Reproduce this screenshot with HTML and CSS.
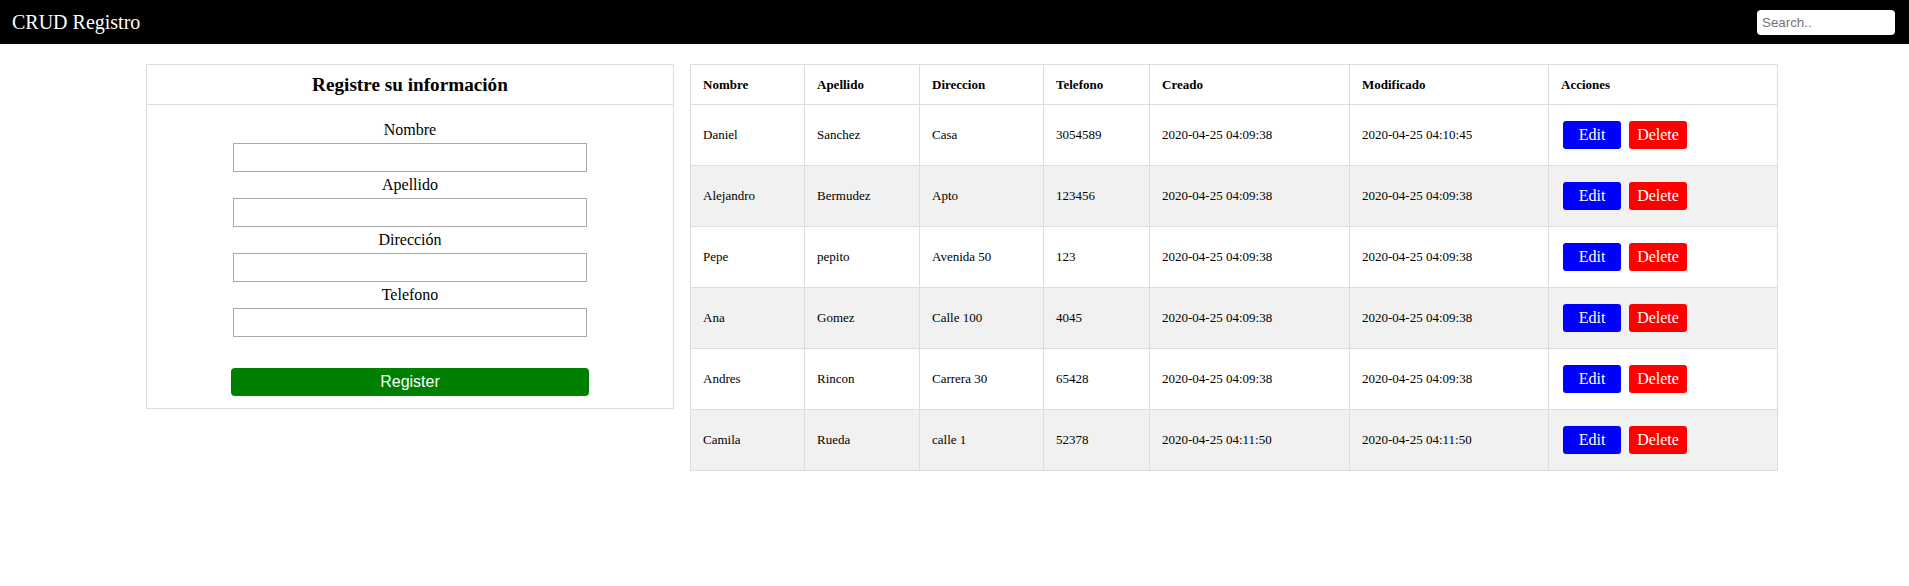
FILE: index.html
```html
<!DOCTYPE html>
<html lang="es">
<head>
<meta charset="utf-8">
<title>CRUD Registro</title>
<link rel="stylesheet" href="styles.css">
</head>
<body>
<nav class="navbar">
  <span class="brand">CRUD Registro</span>
  <input class="search" type="text" placeholder="Search..">
</nav>
<main class="main">
  <section class="card">
    <div class="card-header"><h3 class="card-title">Registre su información</h3></div>
    <form class="form">
      <label class="label">Nombre</label>
      <input class="field" type="text">
      <label class="label">Apellido</label>
      <input class="field" type="text">
      <label class="label">Dirección</label>
      <input class="field" type="text">
      <label class="label">Telefono</label>
      <input class="field" type="text">
      <button class="btn-register" type="button">Register</button>
    </form>
  </section>
  <table class="table">
    <colgroup>
      <col class="c1"><col class="c2"><col class="c3"><col class="c4"><col class="c5"><col class="c6"><col class="c7">
    </colgroup>
    <thead>
      <tr><th>Nombre</th><th>Apellido</th><th>Direccion</th><th>Telefono</th><th>Creado</th><th>Modificado</th><th>Acciones</th></tr>
    </thead>
    <tbody>
      <tr><td>Daniel</td><td>Sanchez</td><td>Casa</td><td>3054589</td><td>2020-04-25 04:09:38</td><td>2020-04-25 04:10:45</td><td class="actions"><div class="btns"><button class="btn btn-edit">Edit</button><button class="btn btn-delete">Delete</button></div></td></tr>
      <tr><td>Alejandro</td><td>Bermudez</td><td>Apto</td><td>123456</td><td>2020-04-25 04:09:38</td><td>2020-04-25 04:09:38</td><td class="actions"><div class="btns"><button class="btn btn-edit">Edit</button><button class="btn btn-delete">Delete</button></div></td></tr>
      <tr><td>Pepe</td><td>pepito</td><td>Avenida 50</td><td>123</td><td>2020-04-25 04:09:38</td><td>2020-04-25 04:09:38</td><td class="actions"><div class="btns"><button class="btn btn-edit">Edit</button><button class="btn btn-delete">Delete</button></div></td></tr>
      <tr><td>Ana</td><td>Gomez</td><td>Calle 100</td><td>4045</td><td>2020-04-25 04:09:38</td><td>2020-04-25 04:09:38</td><td class="actions"><div class="btns"><button class="btn btn-edit">Edit</button><button class="btn btn-delete">Delete</button></div></td></tr>
      <tr><td>Andres</td><td>Rincon</td><td>Carrera 30</td><td>65428</td><td>2020-04-25 04:09:38</td><td>2020-04-25 04:09:38</td><td class="actions"><div class="btns"><button class="btn btn-edit">Edit</button><button class="btn btn-delete">Delete</button></div></td></tr>
      <tr><td>Camila</td><td>Rueda</td><td>calle 1</td><td>52378</td><td>2020-04-25 04:11:50</td><td>2020-04-25 04:11:50</td><td class="actions"><div class="btns"><button class="btn btn-edit">Edit</button><button class="btn btn-delete">Delete</button></div></td></tr>
    </tbody>
  </table>
</main>
</body>
</html>
```
FILE: styles.css
```css
* { box-sizing: border-box; }
body {
  margin: 0;
  font-family: "Liberation Serif", "Times New Roman", serif;
  color: #000;
  background: #fff;
}
.navbar {
  height: 44px;
  background: #000;
  display: flex;
  align-items: center;
  justify-content: space-between;
  padding: 0 14px 0 12px;
}
.brand {
  color: #fff;
  font-size: 20px;
  line-height: 22px;
  margin-top: -1px;
}
.search {
  width: 138px;
  height: 25px;
  border: none;
  border-radius: 4px;
  padding: 0 5px;
  font-family: "Liberation Sans", Arial, sans-serif;
  font-size: 13.333px;
  background: #fff;
  outline: none;
}
.search::placeholder { color: #757575; }
.main {
  display: flex;
  align-items: flex-start;
  gap: 16px;
  padding: 20px 0 0 146px;
}
.card {
  width: 528px;
  border: 1px solid #ddd;
}
.card-header {
  height: 40px;
  border-bottom: 1px solid #ddd;
  display: flex;
  align-items: center;
  justify-content: center;
}
.card-title {
  margin: 0;
  font-size: 19.2px;
  font-weight: bold;
}
.form {
  display: flex;
  flex-direction: column;
  align-items: center;
  padding: 16px 0 12px;
}
.label {
  display: block;
  font-size: 16px;
  line-height: 18px;
  text-align: center;
}
.field {
  width: 354px;
  height: 29px;
  margin: 4px 0;
  border: 1px solid #a9a9a9;
  background: #fff;
  padding: 1px 2px;
  font-size: 13.333px;
}
.btn-register {
  width: 358px;
  height: 28px;
  margin-top: 27px;
  border: none;
  border-radius: 4px;
  background: #008000;
  color: #fff;
  font-family: "Liberation Sans", Arial, sans-serif;
  font-size: 16px;
  padding: 0;
}
.table {
  width: 1087px;
  border-collapse: collapse;
  table-layout: fixed;
  font-size: 13px;
}
.c1 { width: 114px; }
.c2 { width: 115px; }
.c3 { width: 124px; }
.c4 { width: 106px; }
.c5 { width: 200px; }
.c6 { width: 199px; }
.c7 { width: 229px; }
.table th,
.table td {
  border: 1px solid #ddd;
  padding: 0 12px;
  text-align: left;
  vertical-align: middle;
}
.table th {
  height: 40px;
  font-weight: bold;
}
.table td { height: 61px; }
.table tbody tr:nth-child(even) { background: #f1f1f1; }
.table td.actions { padding-left: 14px; }
.btns {
  display: flex;
  gap: 8px;
}
.btn {
  width: 58px;
  height: 28px;
  border: none;
  border-radius: 3px;
  color: #fff;
  font-family: "Liberation Serif", "Times New Roman", serif;
  font-size: 16px;
  padding: 0;
}
.btn-edit { background: #0000ff; }
.btn-delete { background: #ff0000; }
```
